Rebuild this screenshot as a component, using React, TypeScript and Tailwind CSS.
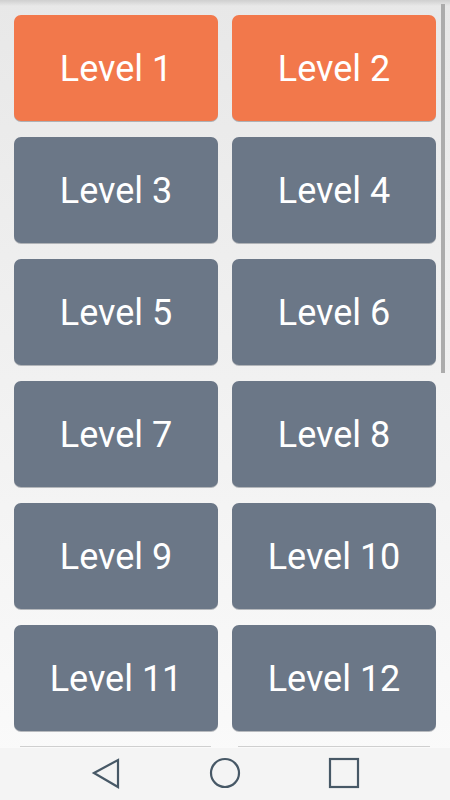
import React from 'react';

const levels = Array.from({ length: 12 }, (_, i) => i + 1);

export default function App() {
  return (
    <div className="relative h-[800px] w-[450px] overflow-hidden bg-gradient-to-b from-[#e8e8e8] to-[#fbfbfb] font-['Roboto',sans-serif]">
      {/* top edge shadow */}
      <div className="absolute left-0 top-0 h-[6px] w-full bg-gradient-to-b from-[#cfcfcf] to-transparent" />

      <div className="grid grid-cols-2 gap-x-[14px] gap-y-[16px] pl-[14px] pr-[14px] pt-[15px]">
        {levels.map((n) => (
          <button
            key={n}
            className={`flex h-[106px] items-center justify-center rounded-[7px] pt-[2px] text-[36px] text-white shadow-[0_1px_0_rgba(60,70,80,0.35)] ${
              n <= 2 ? 'bg-[#f2784b]' : 'bg-[#6b7787]'
            }`}
          >
            Level {n}
          </button>
        ))}
      </div>

      {/* scrollbar */}
      <div className="absolute left-[441px] top-[4px] h-[369px] w-[4px] bg-[#acacac]" />

      {/* next row peeking above nav */}
      <div className="absolute left-[20px] top-[746px] h-[1px] w-[191px] bg-[#cfcfcf]" />
      <div className="absolute left-[238px] top-[746px] h-[1px] w-[192px] bg-[#cfcfcf]" />

      {/* nav bar */}
      <div className="absolute bottom-0 left-0 flex h-[52px] w-full items-center justify-center bg-[#f4f4f4]">
        <svg width="450" height="52" viewBox="0 0 450 52" fill="none" stroke="#475866" strokeWidth="2.2">
          <polygon points="94,25 118,12 118,39" strokeLinejoin="miter" />
          <circle cx="225" cy="25" r="14" />
          <rect x="330" y="11" width="28" height="28" />
        </svg>
      </div>
    </div>
  );
}
